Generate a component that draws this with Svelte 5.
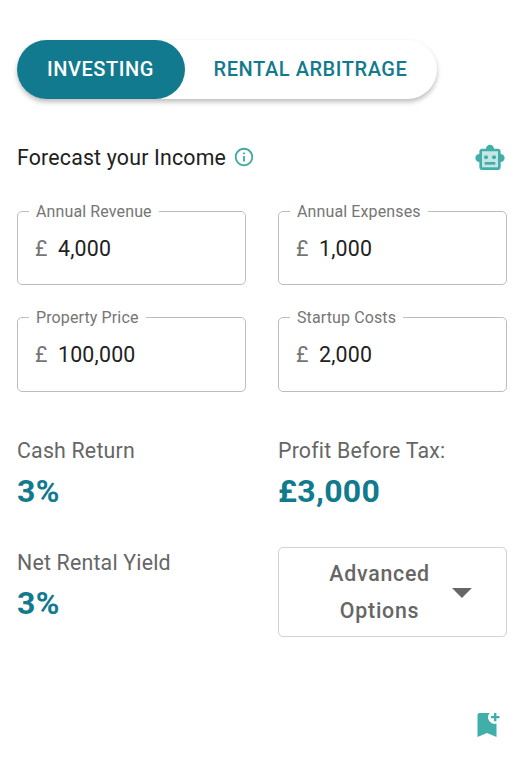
<script>
  let mode = $state('INVESTING');
  const modes = ['INVESTING', 'RENTAL ARBITRAGE'];
  let fields = $state([
    { label: 'Annual Revenue', value: '4,000' },
    { label: 'Annual Expenses', value: '1,000' },
    { label: 'Property Price', value: '100,000' },
    { label: 'Startup Costs', value: '2,000' }
  ]);
</script>

<main>
  <div class="toggle">
    {#each modes as m}
      <button class:active={mode === m} onclick={() => (mode = m)}>{m}</button>
    {/each}
  </div>

  <header>
    <h1>Forecast your Income</h1>
    <svg class="info" viewBox="0 0 24 24" width="22" height="22" fill="#43aaa0">
      <path d="M11 7h2v2h-2zm0 4h2v6h-2zm1-9C6.48 2 2 6.48 2 12s4.48 10 10 10 10-4.48 10-10S17.52 2 12 2zm0 18c-4.41 0-8-3.59-8-8s3.59-8 8-8 8 3.59 8 8-3.59 8-8 8z" />
    </svg>
    <svg class="robot" viewBox="0 0 24 24" width="32" height="32">
      <path fill="#c6e6e4" d="M5 6h14v13H5z" />
      <path fill="#40afaa" d="M20 9V7c0-1.100-.9-2-2-2h-3c0-1.660-1.340-3-3-3S9 3.340 9 5H6c-1.100 0-2 .9-2 2v2c-1.660 0-3 1.340-3 3s1.340 3 3 3v4c0 1.100.9 2 2 2h12c1.100 0 2-.9 2-2v-4c1.660 0 3-1.340 3-3s-1.340-3-3-3zm-2 10H6V7h12v12z" />
      <g fill="#40afaa"><circle cx="9" cy="11.500" r="1.500" /><circle cx="15" cy="11.500" r="1.500" /><path d="M8 15h8v2H8z" /></g>
    </svg>
  </header>

  <section class="grid fields">
    {#each fields as f}
      <fieldset>
        <legend>{f.label}</legend>
        <div class="entry"><span>£</span><input aria-label={f.label} bind:value={f.value} /></div>
      </fieldset>
    {/each}
  </section>

  <section class="grid results">
    <div class="stat"><p>Cash Return</p><strong>3%</strong></div>
    <div class="stat"><p>Profit Before Tax:</p><strong>£3,000</strong></div>
    <div class="stat"><p>Net Rental Yield</p><strong>3%</strong></div>
    <button class="advanced">
      <span>Advanced Options</span>
      <svg viewBox="0 0 20 10" width="20" height="10"><path fill="#666" d="M0 0h20L10 10z" /></svg>
    </button>
  </section>

  <footer>
    <svg viewBox="0 0 24 26" width="24" height="26" fill="#40afaa">
      <path d="M2.500 1H12.800A6.500 6.500 0 0 0 19.500 11.600V25L10 21 .5 25V3a2 2 0 0 1 2-2z" />
      <path d="M17 1h2.400v2.900h3.100v2.400h-3.100v2.900H17V6.300h-3.100V3.900H17z" />
    </svg>
  </footer>
</main>

<style>
  :global(body) { background: #fff; }
  main {
    box-sizing: border-box;
    width: 524px;
    height: 764px;
    padding: 40px 17px 0;
    overflow: hidden;
    font-family: Roboto, sans-serif;
    color: #212121;
  }
  button { font-family: inherit; cursor: pointer; }
  .toggle {
    display: flex;
    width: 420px;
    height: 59px;
    border-radius: 30px;
    box-shadow: 0 3px 5px rgba(0, 0, 0, 0.26);
  }
  .toggle button {
    flex: 1;
    padding: 0 1px 2px 0;
    border: 0;
    border-radius: 30px;
    background: transparent;
    color: #127a8e;
    font-size: 20px;
    font-weight: 500;
    letter-spacing: 0.57px;
  }
  .toggle button:first-child { flex: 0 0 168px; }
  .toggle button.active { background: #127a8e; color: #fff; }
  header {
    display: flex;
    align-items: center;
    height: 32px;
    margin-top: 42px;
  }
  h1 {
    margin: 0;
    padding-top: 2px;
    font-size: 21.330px;
    font-weight: 400;
    letter-spacing: 0.18px;
    line-height: 32px;
  }
  .info { margin-left: 7px; }
  .robot { margin: 2px 1px 0 auto; }
  .grid {
    display: grid;
    grid-template-columns: 229px 229px;
    column-gap: 32px;
  }
  .fields {
    margin-top: 30px;
    grid-template-rows: 82px 83px;
    row-gap: 24px;
  }
  fieldset {
    box-sizing: border-box;
    min-width: 0;
    margin: 0;
    padding: 0 18px 0 11px;
    border: 1px solid #bdbdbd;
    border-radius: 5px;
  }
  legend {
    height: 17px;
    padding: 0 7px;
    color: #757575;
    font-size: 16px;
    line-height: 17px;
    letter-spacing: 0.12px;
  }
  .entry {
    display: flex;
    align-items: center;
    height: 40px;
    padding: 8px 0 0 6px;
    font-size: 21.330px;
  }
  .entry span { width: 23px; color: #757575; letter-spacing: 0.2px; }
  input {
    min-width: 0;
    width: 150px;
    padding: 0;
    border: 0;
    outline: 0;
    background: transparent;
    color: #212121;
    font: inherit;
    letter-spacing: 0.2px;
  }
  .results { margin-top: 43px; grid-template-rows: 112px 90px; }
  .stat p {
    margin: 0;
    color: #666;
    font-size: 21.330px;
    letter-spacing: 0.2px;
    line-height: 32px;
  }
  .stat strong {
    display: block;
    color: #127a8e;
    font-size: 32px;
    font-weight: 700;
    line-height: 48px;
    letter-spacing: 0.3px;
  }
  .advanced {
    display: flex;
    align-items: center;
    box-sizing: border-box;
    height: 90px;
    padding: 0 34px 0 41px;
    border: 1px solid #d2d2d2;
    border-radius: 5px;
    background: #fff;
    color: #666;
    font-size: 21.330px;
    font-weight: 500;
    line-height: 37px;
    letter-spacing: 0.75px;
  }
  .advanced span { width: 120px; }
  .advanced svg { margin: 2px 0 0 13px; }
  footer {
    display: flex;
    justify-content: flex-end;
    margin-top: 75px;
    padding-right: 6px;
  }
</style>
